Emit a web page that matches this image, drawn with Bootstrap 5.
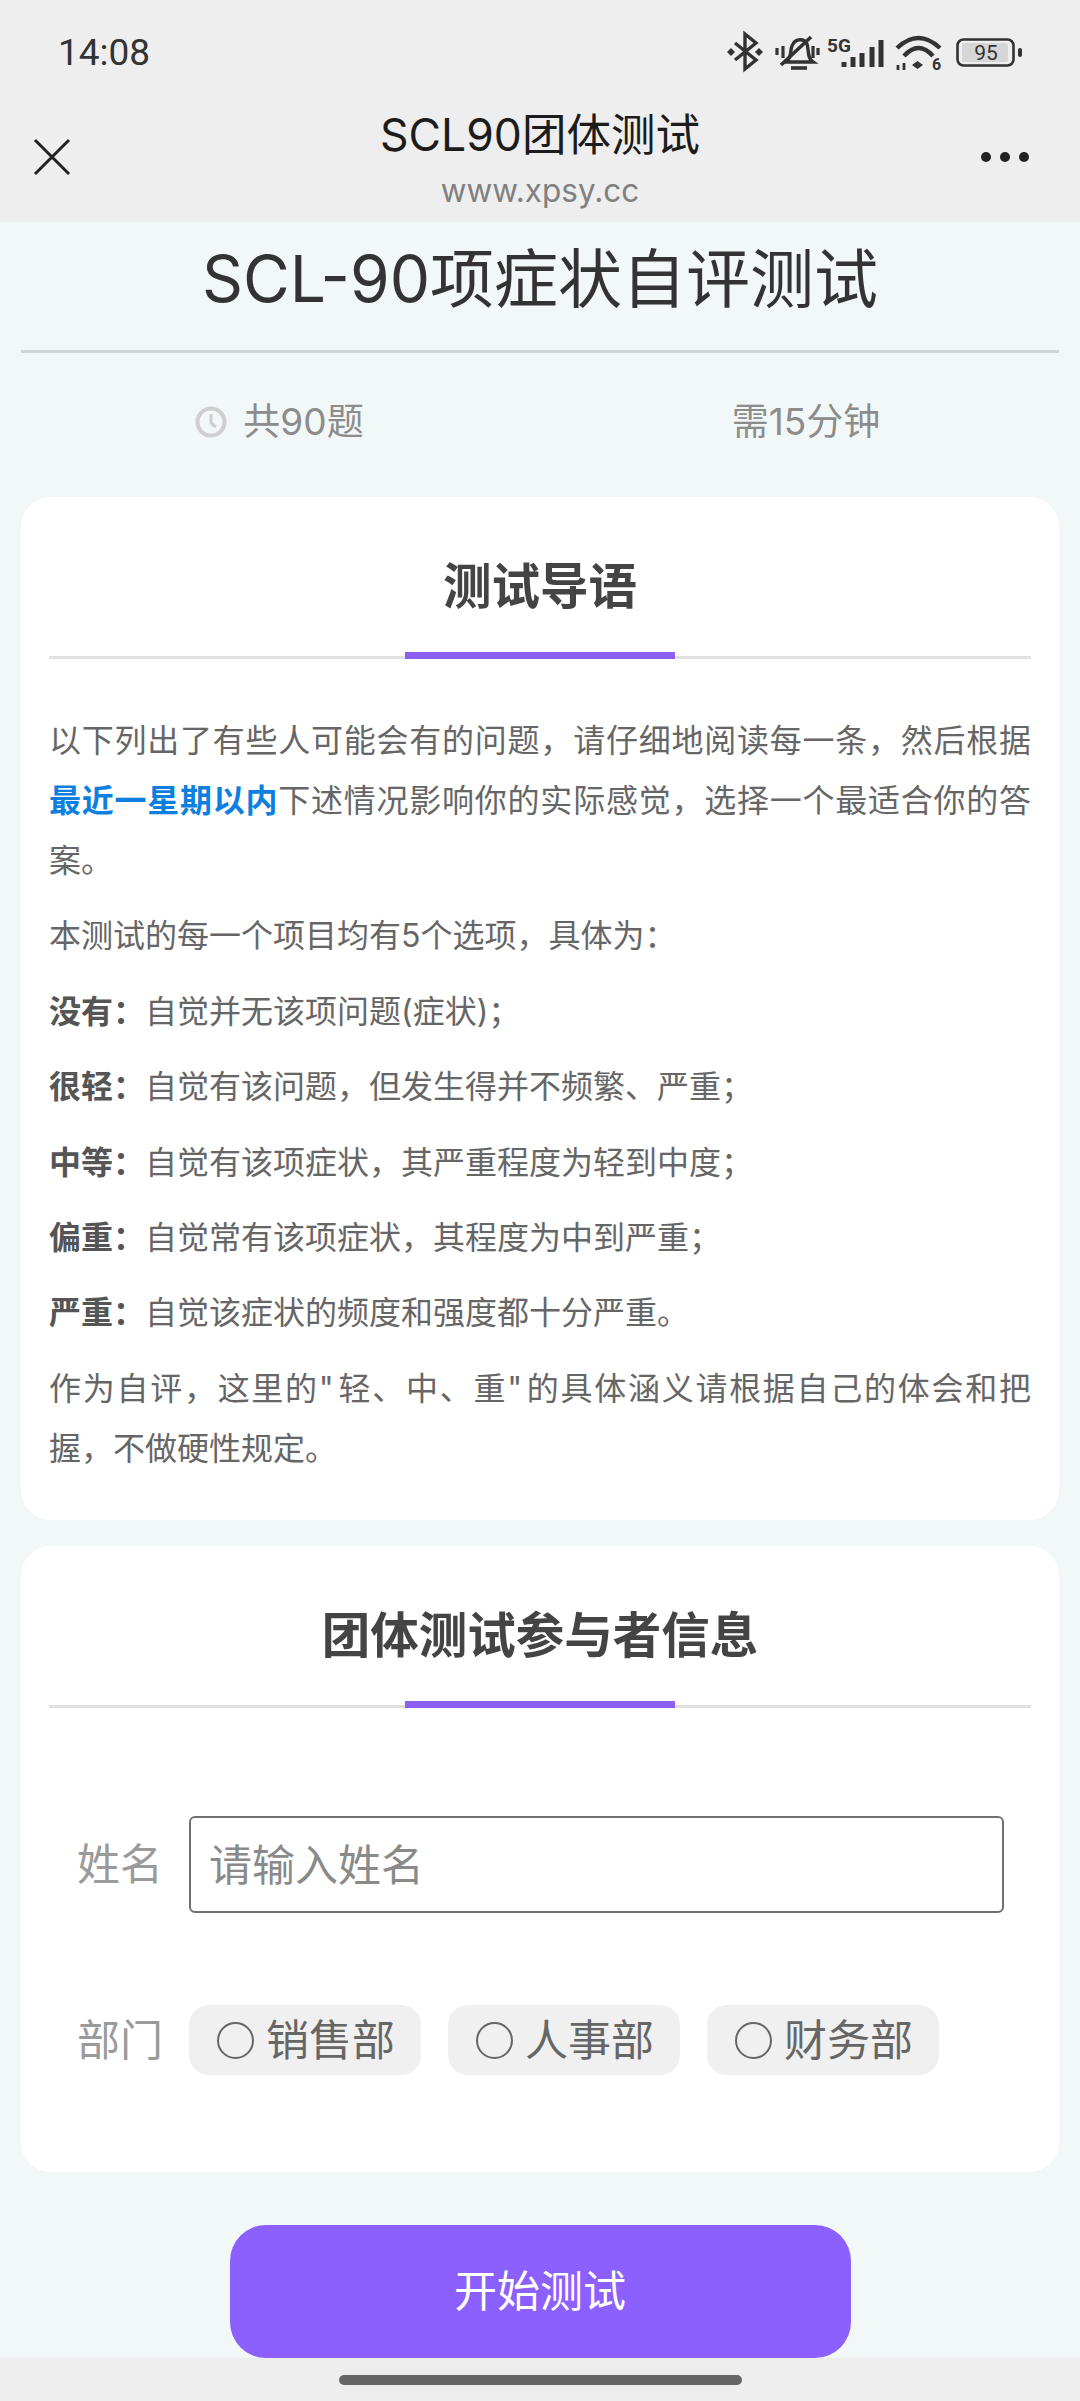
<!DOCTYPE html>
<html lang="zh-CN">
<head>
    <meta charset="UTF-8">
    <meta name="viewport" content="width=device-width, initial-scale=1.0">
    <title>SCL90团体测试</title>
    <link href="https://cdn.jsdelivr.net/npm/bootstrap@5.3.3/dist/css/bootstrap.min.css" rel="stylesheet">
    <style>
        html, body { height: 2401px; overflow: hidden; }
        body { background: #f2f7f7; font-family: Inter, "Noto Sans CJK SC", sans-serif; color: #666; }
        .top-chrome { background: #eeeeee; height: 222px; }
        .status-row { height: 104px; padding: 0 50px 0 58px; }
        .clock { font-family: Roboto, sans-serif; font-size: 37px; color: #333; line-height: 1; }
        .title-row { height: 118px; padding: 2px 33px 0; }
        .side-slot { flex: 0 0 120px; padding-top: 32px; }
        .dots-icon { margin-right: 18px; }
        .page-name { font-size: 44.5px; line-height: 58px; color: #1c1c1c; }
        .page-url { font-size: 31.5px; line-height: 42px; color: #808080; margin-top: 6px; }
        .test-title { font-size: 64px; line-height: 90px; color: #333; font-weight: 400; margin: 0; padding-top: 12px; }
        .title-rule { height: 3px; background: #cfd4d6; margin: 26px 21px 0; }
        .meta-row { height: 144px; padding-bottom: 6px; font-size: 37px; color: #8c8c8c; }
        .meta-cell { width: 50%; }
        .meta-left { padding-left: 19px; }
        .meta-right { padding-right: 8px; }
        .panel-box { background: #fff; border-radius: 30px; margin: 0 21px; padding: 0 28px; }
        .panel-intro { height: 1023px; padding-top: 60px; }
        .panel-form { height: 626px; margin-top: 26px; padding-top: 60px; }
        .panel-head { font-size: 48.5px; line-height: 60px; font-weight: 700; color: #444; margin: 0; text-align: center; }
        .head-rule { height: 3px; background: #e0e0e0; position: relative; margin-top: 39px; }
        .head-rule::after { content: ""; position: absolute; left: 356px; width: 270px; height: 7px; bottom: 0; background: #8c5ff0; }
        .intro-text { padding-top: 52px; }
        .intro-text p { font-size: 32px; line-height: 60px; margin: 0 0 15.4px; color: #666; text-align: justify; }
        .intro-text b { color: #555; }
        .intro-text .hot { color: #0d7fe0; }
        .wide-quote { letter-spacing: 3px; }
        .form-area { padding: 108px 27px 0 28px; }
        .field-label { font-size: 43px; color: #9a9a9a; width: 112px; flex: none; }
        .name-input { height: 97px; min-width: 0; border: 2px solid #707070; border-radius: 6px; font-size: 43px; padding: 0 18px; flex: 1; background: #fff; }
        .name-input::placeholder { color: #8a8a8a; opacity: 1; }
        .dept-row { margin-top: 92px; }
        .dept-pill { height: 70px; width: 232px; background: #f0f0f0; border-radius: 20px; font-size: 43px; color: #666; padding-left: 28px; gap: 12px; }
        .dept-pill + .dept-pill { margin-left: 27px; }
        .dept-circle { width: 37px; height: 37px; border: 2px solid #666; border-radius: 50%; flex: none; }
        .start-wrap { margin-top: 53px; }
        .start-btn { display: block; width: 621px; height: 133px; margin: 0 auto; background: #8c5fff; border: 0; border-radius: 36px; font-size: 43px; color: #fff; }
        .start-btn:hover { background: #8c5fff; color: #fff; }
        .bottom-bar { position: absolute; left: 0; right: 0; top: 2358px; height: 43px; background: #eeeeee; }
        .home-pill { width: 403px; height: 10px; background: #666; border-radius: 5px; margin: 17px auto 0; }
    </style>
</head>
<body class="position-relative">

<div class="top-chrome">
    <div class="status-row d-flex align-items-center justify-content-between">
        <span class="clock">14:08</span>
        <svg width="310" height="50" viewBox="720 27 310 50" fill="none" stroke="#333" stroke-width="3">
            <!-- bluetooth -->
            <path d="M735 43 L756 60 L745 69 V34 L756 43 L735 60" stroke-width="3.4"/>
            <path d="M731 48 L735 52 L731 56 L727 52 Z M759 48 L763 52 L759 56 L755 52 Z" fill="#333" stroke="none"/>
            <!-- muted bell -->
            <path d="M786 62 C792 58 790 50 792 46 C795 38 804 38 807 44 C809 50 807 58 813 62 Z" stroke-width="3.4"/>
            <path d="M791 68 H807" stroke-width="3.6"/>
            <path d="M781 65 L811 37" stroke-width="3.6"/>
            <path d="M777 48 V55 M783 46 V58 M813 46 V58 M818 48 V55" stroke-width="3.2"/>
            <!-- 5G -->
            <text x="827" y="52" font-family="Roboto" font-weight="700" font-size="19" fill="#333" stroke="none">5G</text>
            <!-- signal -->
            <path d="M844 67 V62 M853 67 V57 M862 67 V53 M872 67 V47 M881 67 V40" stroke-width="5"/>
            <!-- wifi -->
            <path d="M897 48 Q918.5 28 940 48 M904 56 Q918.5 40 933 56" stroke-width="4.4"/>
            <path d="M912 65 L917.5 61 L923 65 L917.5 69 Z" fill="#333" stroke="none"/>
            <path d="M898 65 V70 M904 63 V70" stroke-width="2.8"/>
            <text x="932" y="70" font-family="Roboto" font-weight="700" font-size="16" fill="#333" stroke="none">6</text>
            <!-- battery -->
            <rect x="957.5" y="39.5" width="56" height="26" rx="6" stroke-width="2.6"/>
            <rect x="962" y="43" width="46" height="19" rx="2" fill="#d6d6d6" stroke="none"/>
            <text x="986" y="60" text-anchor="middle" font-family="Roboto" font-size="21" fill="#333" stroke="none">95</text>
            <rect x="1018" y="48" width="4" height="9" rx="2" fill="#333" stroke="none"/>
        </svg>
    </div>
    <div class="title-row d-flex align-items-start justify-content-between">
        <div class="side-slot">
            <svg class="d-block" width="38" height="38" viewBox="0 0 38 38" fill="none" stroke="#222" stroke-width="3"><path d="M2 2 L36 36 M36 2 L2 36"/></svg>
        </div>
        <div class="text-center">
            <div class="page-name">SCL90团体测试</div>
            <div class="page-url">www.xpsy.cc</div>
        </div>
        <div class="side-slot d-flex justify-content-end">
            <svg class="dots-icon" width="48" height="38" viewBox="0 0 48 38" fill="#222"><circle cx="5" cy="19" r="5"/><circle cx="24" cy="19" r="5"/><circle cx="43" cy="19" r="5"/></svg>
        </div>
    </div>
</div>

<h1 class="test-title text-center">SCL-90项症状自评测试</h1>
<div class="title-rule"></div>

<div class="meta-row d-flex align-items-center">
    <div class="meta-cell meta-left d-flex align-items-center justify-content-center gap-3">
        <svg width="32" height="34" viewBox="0 0 32 34" fill="none" stroke="#cfcfcf" stroke-width="4"><circle cx="16" cy="17" r="13.5"/><path d="M16 9 V18 L21 22" stroke-width="3"/></svg>
        <span>共90题</span>
    </div>
    <div class="meta-cell meta-right text-center">需15分钟</div>
</div>

<div class="panel-box panel-intro">
    <h2 class="panel-head">测试导语</h2>
    <div class="head-rule"></div>
    <div class="intro-text">
        <p>以下列出了有些人可能会有的问题，请仔细地阅读每一条，然后根据<b class="hot">最近一星期以内</b>下述情况影响你的实际感觉，选择一个最适合你的答案。</p>
        <p>本测试的每一个项目均有5个选项，具体为：</p>
        <p><b>没有：</b>自觉并无该项问题(症状)；</p>
        <p><b>很轻：</b>自觉有该问题，但发生得并不频繁、严重；</p>
        <p><b>中等：</b>自觉有该项症状，其严重程度为轻到中度；</p>
        <p><b>偏重：</b>自觉常有该项症状，其程度为中到严重；</p>
        <p><b>严重：</b>自觉该症状的频度和强度都十分严重。</p>
        <p>作为自评，这里的<span class="wide-quote">"</span>轻、中、重<span class="wide-quote">"</span>的具体涵义请根据自己的体会和把握，不做硬性规定。</p>
    </div>
</div>

<div class="panel-box panel-form">
    <h2 class="panel-head">团体测试参与者信息</h2>
    <div class="head-rule"></div>
    <div class="form-area">
        <div class="d-flex align-items-center">
            <label class="field-label" for="nameInput">姓名</label>
            <input id="nameInput" class="name-input" type="text" placeholder="请输入姓名">
        </div>
        <div class="dept-row d-flex align-items-center">
            <span class="field-label">部门</span>
            <div class="dept-pill d-flex align-items-center"><span class="dept-circle"></span>销售部</div>
            <div class="dept-pill d-flex align-items-center"><span class="dept-circle"></span>人事部</div>
            <div class="dept-pill d-flex align-items-center"><span class="dept-circle"></span>财务部</div>
        </div>
    </div>
</div>

<div class="start-wrap">
    <button class="btn start-btn" type="button">开始测试</button>
</div>

<div class="bottom-bar"><div class="home-pill"></div></div>

<script src="https://cdn.jsdelivr.net/npm/bootstrap@5.3.3/dist/js/bootstrap.bundle.min.js"></script>
</body>
</html>
